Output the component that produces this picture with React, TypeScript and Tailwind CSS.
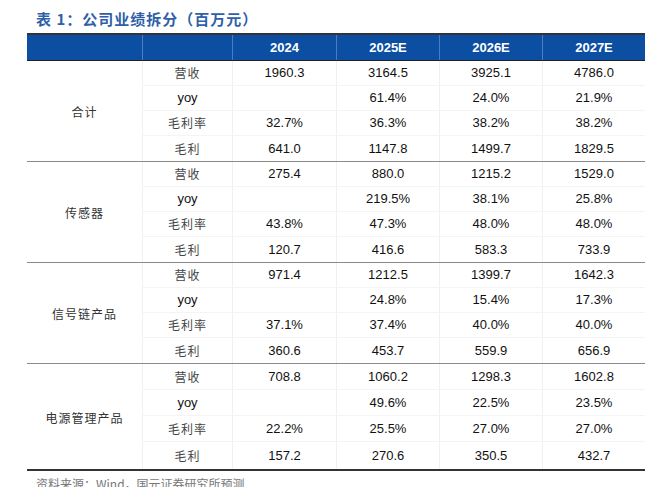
const YEARS = ["2024", "2025E", "2026E", "2027E"];

type Segment = {
  name: string;
  rows: { label: string; values: string[] }[];
};

const SEGMENTS: Segment[] = [
  {
    name: "合计",
    rows: [
      { label: "营收", values: ["1960.3", "3164.5", "3925.1", "4786.0"] },
      { label: "yoy", values: ["", "61.4%", "24.0%", "21.9%"] },
      { label: "毛利率", values: ["32.7%", "36.3%", "38.2%", "38.2%"] },
      { label: "毛利", values: ["641.0", "1147.8", "1499.7", "1829.5"] },
    ],
  },
  {
    name: "传感器",
    rows: [
      { label: "营收", values: ["275.4", "880.0", "1215.2", "1529.0"] },
      { label: "yoy", values: ["", "219.5%", "38.1%", "25.8%"] },
      { label: "毛利率", values: ["43.8%", "47.3%", "48.0%", "48.0%"] },
      { label: "毛利", values: ["120.7", "416.6", "583.3", "733.9"] },
    ],
  },
  {
    name: "信号链产品",
    rows: [
      { label: "营收", values: ["971.4", "1212.5", "1399.7", "1642.3"] },
      { label: "yoy", values: ["", "24.8%", "15.4%", "17.3%"] },
      { label: "毛利率", values: ["37.1%", "37.4%", "40.0%", "40.0%"] },
      { label: "毛利", values: ["360.6", "453.7", "559.9", "656.9"] },
    ],
  },
  {
    name: "电源管理产品",
    rows: [
      { label: "营收", values: ["708.8", "1060.2", "1298.3", "1602.8"] },
      { label: "yoy", values: ["", "49.6%", "22.5%", "23.5%"] },
      { label: "毛利率", values: ["22.2%", "25.5%", "27.0%", "27.0%"] },
      { label: "毛利", values: ["157.2", "270.6", "350.5", "432.7"] },
    ],
  },
];

const cjk = "font-['Noto_Sans_CJK_SC',sans-serif]";
const num = "font-['Liberation_Sans','Noto_Sans_CJK_SC',sans-serif]";

function SegmentBlock({ seg, last }: { seg: Segment; last: boolean }) {
  const rowH = last
    ? ["h-[26px]", "h-[26px]", "h-[26px]", "h-[27px]"]
    : ["h-[25px]", "h-[25px]", "h-[25px]", "h-[25px]"];
  return (
    <div
      className={
        last
          ? "flex border-b-2 border-[#333]"
          : "flex border-b border-[#8a8a8a]"
      }
    >
      <div
        className={`flex w-[116px] items-center justify-center border-r border-[#f0f0f0] pt-[2px] text-[12px] tracking-[1px] text-[#333] ${cjk}`}
      >
        {seg.name}
      </div>
      <div className="flex flex-col">
        {seg.rows.map((row, i) => (
          <div
            key={row.label}
            className={`grid grid-cols-[90px_104px_103px_103px_102px] ${rowH[i]} ${
              i < 3 ? "border-b border-[#f4f4f4]" : ""
            }`}
          >
            <div
              className={`flex items-center justify-center border-r border-[#f0f0f0] ${
                row.label === "yoy"
                  ? `${num} text-[13px] text-[#111]`
                  : `${cjk} text-[12px] tracking-[1px] text-[#444]`
              }`}
            >
              {row.label}
            </div>
            {row.values.map((v, j) => (
              <div
                key={j}
                className={`flex items-center justify-center text-[13px] text-[#111] ${num} ${
                  j < 3 ? "border-r border-[#f0f0f0]" : ""
                }`}
              >
                {v}
              </div>
            ))}
          </div>
        ))}
      </div>
    </div>
  );
}

export default function App() {
  return (
    <div className="h-[487px] w-[663px] overflow-hidden bg-white">
      {/* Title */}
      <div
        className={`flex h-[33px] items-center pl-[36px] pt-[6px] text-[15px] font-bold tracking-[1px] text-[#2f5fa8] ${cjk}`}
      >
        表 1：公司业绩拆分（百万元）
      </div>

      <div className="ml-[27px] w-[618px]">
        {/* Header */}
        <div className="grid h-[28px] grid-cols-[116px_90px_104px_103px_103px_102px] border-t-2 border-b border-t-[#333] border-b-[#222] bg-[#0c4ea1]">
          <div className="border-r border-[#4c7cc2]" />
          <div className="border-r border-[#4c7cc2]" />
          {YEARS.map((y, i) => (
            <div
              key={y}
              className={`flex items-center justify-center text-[13px] font-bold text-white ${num} ${
                i < 3 ? "border-r border-[#4c7cc2]" : ""
              }`}
            >
              {y}
            </div>
          ))}
        </div>

        {SEGMENTS.map((seg, i) => (
          <SegmentBlock key={seg.name} seg={seg} last={i === SEGMENTS.length - 1} />
        ))}
      </div>

      {/* Source */}
      <div className={`pl-[36px] pt-[4px] text-[12px] text-[#777] ${cjk}`}>
        资料来源：Wind，国元证券研究所预测
      </div>
    </div>
  );
}
